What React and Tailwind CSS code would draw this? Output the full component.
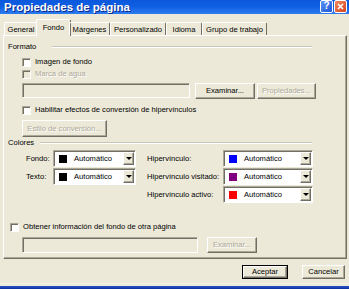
const raised = 'border border-t-white border-l-white border-r-[#716f64] border-b-[#716f64] shadow-[inset_-1px_-1px_#aca899]'
const sunken = 'border border-t-[#aca899] border-l-[#aca899] border-r-white border-b-white shadow-[inset_1px_1px_#716f64]'
const disabledText = 'text-[#aca899] [text-shadow:1px_1px_#ffffff]'

const tabs = [
  ['General', 34],
  ['Fondo', 31],
  ['Márgenes', 41],
  ['Personalizado', 56],
  ['Idioma', 36],
  ['Grupo de trabajo', 65],
]

function Check({ label, disabled }) {
  return (
    <>
      <div className={`h-[9px] w-[9px] shrink-0 ${sunken} ${disabled ? 'bg-[#ece9d8]' : 'bg-white'}`} />
      <span className={`ml-[4px] ${disabled ? disabledText : ''}`}>{label}</span>
    </>
  )
}

function Button({ children, w, h = 'h-full', disabled, def }) {
  return (
    <div className={`${w} ${h} shrink-0 ${def ? 'border border-black' : ''}`}>
      <div className={`flex h-full w-full items-center justify-center ${raised} ${disabled ? disabledText : ''}`}>{children}</div>
    </div>
  )
}

function Combo({ w, color }) {
  return (
    <div className={`flex h-[17px] ${w} shrink-0 items-center bg-white pl-[5px] pr-[1px] ${sunken}`}>
      <div className={`h-[8px] w-[8px] shrink-0 ${color}`} />
      <span className="ml-[7px] flex-1">Automático</span>
      <div className={`flex h-[13px] w-[11px] items-center justify-center bg-[#ece9d8] ${raised}`}>
        <div className="h-0 w-0 border-x-[3px] border-t-[3px] border-x-transparent border-t-black" />
      </div>
    </div>
  )
}

function GroupHead({ label, gap }) {
  return (
    <div className="flex h-[10px] items-center pl-[4px] pr-[34px]">
      <span>{label}</span>
      <div className={`${gap} h-[2px] flex-1 border-t border-b border-t-[#c9c5b4] border-b-white`} />
    </div>
  )
}

export default function App() {
  return (
    <div className="flex h-[289px] w-[349px] flex-col overflow-hidden bg-[#ece9d8] font-['Liberation_Sans',Arial,sans-serif] text-[7.6px] leading-[10px] text-black">
      {/* title bar */}
      <div className="flex h-[14px] shrink-0 items-center bg-gradient-to-b from-[#0b58dc] via-[#1060e4] to-[#2d7bee] pl-[4px] pr-[2px]">
        <span className="text-[11.5px] font-bold leading-[14px] text-white [text-shadow:1px_1px_#0b2a8c]">Propiedades de página</span>
        <div className="ml-auto flex -mt-[2px] gap-[1px]">
          <div className="flex h-[13px] w-[13px] items-center justify-center rounded-[2px] border border-white bg-gradient-to-br from-[#5a92f5] to-[#1f55d6] text-[10px] font-bold leading-none text-white">?</div>
          <div className="flex h-[13px] w-[13px] items-center justify-center rounded-[2px] border border-white bg-gradient-to-br from-[#f08a5e] to-[#d6401b]">
            <svg width="7" height="7" viewBox="0 0 7 7"><path d="M1 1L6 6M6 1L1 6" stroke="white" strokeWidth="1.6" /></svg>
          </div>
        </div>
      </div>

      {/* tabs */}
      <div className="relative z-10 flex h-[21px] shrink-0 items-end pl-[4px]">
        {tabs.map(([t, w]) =>
          t === 'Fondo' ? (
            <div key={t} className="-mx-[2px] -mb-px flex h-[17px] items-start justify-center rounded-t-[2px] border-t border-l border-r border-t-white border-l-white border-r-[#716f64] bg-[#ece9d8] pt-[3px]" style={{ width: w + 4 }}>
              {t}
            </div>
          ) : (
            <div key={t} className="flex h-[13px] items-center justify-center rounded-t-[2px] border-t border-l border-r border-t-white border-l-white border-r-[#716f64] pt-[2px]" style={{ width: w }}>
              {t}
            </div>
          )
        )}
      </div>

      {/* panel */}
      <div className="ml-[3px] flex h-[224px] w-[344px] shrink-0 flex-col border border-t-white border-l-white border-r-[#716f64] border-b-[#716f64] shadow-[inset_-1px_-1px_#aca899]">
        <div className="mt-[6px]">
          <GroupHead label="Formato" gap="ml-[16px]" />
        </div>
        <div className="mt-[5px] flex h-[10px] items-center pl-[18px]">
          <Check label="Imagen de fondo" />
        </div>
        <div className="mt-[2px] flex h-[10px] items-center pl-[18px]">
          <Check label="Marca de agua" disabled />
        </div>
        <div className="mt-[4px] flex h-[15px] pl-[18px]">
          <div className={`h-full w-[168px] bg-[#ece9d8] ${sunken}`} />
          <div className="ml-[5px] h-[16px]"><Button w="w-[60px]">Examinar...</Button></div>
          <div className="ml-[2px] h-[16px]"><Button w="w-[59px]" disabled>Propiedades...</Button></div>
        </div>
        <div className="mt-[7px] flex h-[10px] items-center pl-[18px]">
          <Check label="Habilitar efectos de conversión de hipervínculos" />
        </div>
        <div className="mt-[5px] flex h-[17px] pl-[18px]">
          <Button w="w-[85px]" disabled>Estilo de conversión...</Button>
        </div>
        <div className="mt-[1px]">
          <GroupHead label="Colores" gap="ml-[6px]" />
        </div>
        <div className="mt-[2px] flex flex-col gap-[1px] pl-[22px]">
          <div className="flex h-[17px] items-center">
            <span className="w-[27px] shrink-0">Fondo:</span>
            <Combo w="w-[83px]" color="bg-black" />
            <span className="ml-[11px] w-[76px] shrink-0">Hipervínculo:</span>
            <Combo w="w-[90px]" color="bg-[#0000ff]" />
          </div>
          <div className="flex h-[17px] items-center">
            <span className="w-[27px] shrink-0">Texto:</span>
            <Combo w="w-[83px]" color="bg-black" />
            <span className="ml-[11px] w-[76px] shrink-0">Hipervínculo visitado:</span>
            <Combo w="w-[90px]" color="bg-[#800080]" />
          </div>
          <div className="flex h-[17px] items-center">
            <div className="w-[121px] shrink-0" />
            <span className="w-[76px] shrink-0">Hipervínculo activo:</span>
            <Combo w="w-[90px]" color="bg-[#ff0000]" />
          </div>
        </div>
        <div className="mt-[19px] flex h-[10px] items-center pl-[6px]">
          <Check label="Obtener información del fondo de otra página" />
        </div>
        <div className="mt-[5px] flex h-[16px] pl-[18px]">
          <div className={`h-full w-[176px] bg-[#ece9d8] ${sunken}`} />
          <div className="ml-[9px] h-full"><Button w="w-[50px]" disabled>Examinar...</Button></div>
        </div>
      </div>

      {/* buttons */}
      <div className="mt-[6px] flex h-[14px] shrink-0 justify-end gap-[14px] pr-[4px]">
        <Button w="w-[46px]" def>Aceptar</Button>
        <Button w="w-[43px]">Cancelar</Button>
      </div>

      <div className="mt-auto h-px shrink-0 bg-[#f6f0ea]" />
      <div className="mt-[2px] h-[3px] shrink-0 bg-gradient-to-b from-[#2a55c8] to-[#0c2f9e]" />
    </div>
  )
}
